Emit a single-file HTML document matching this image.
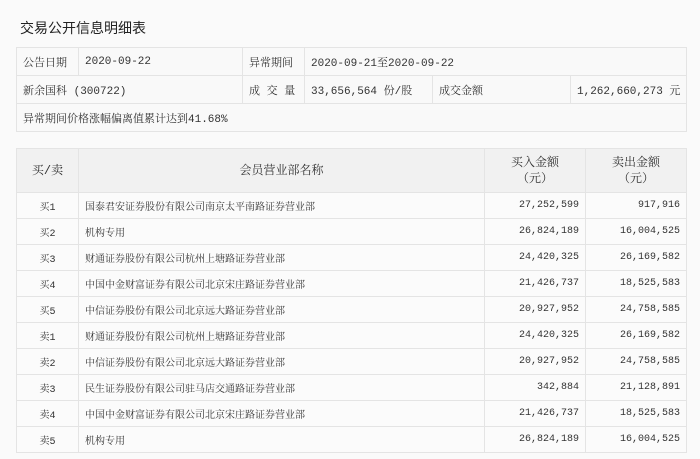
<!DOCTYPE html>
<html><head><meta charset="utf-8"><style>
body{margin:0;width:700px;height:459px;background:#fafafa;font-family:"Liberation Mono","Noto Serif CJK SC",serif;color:#333;position:relative;overflow:hidden}
.t{position:absolute;left:20px;top:18px;font-size:14px;font-family:"Liberation Sans","Noto Sans CJK SC",sans-serif;color:#222}
table{position:absolute;border-collapse:collapse;table-layout:fixed}
td,th{border:1px solid #e4e4e4;font-size:11px;padding:0 6px;white-space:nowrap;font-weight:normal;overflow:hidden}
#a{left:16px;top:47px;width:670px}
#a td{height:27px;background:#f9f9f9}
#b{left:16px;top:148px;width:670px}
#b th{background:#f1f1f1;height:43px;text-align:center;line-height:16px;font-size:12px}
#b td{height:25px;font-size:10px;background:#fbfbfb}
.c{text-align:center}.r{text-align:right}
</style></head><body>
<div class="t">交易公开信息明细表</div>
<table id="a"><colgroup><col style="width:62px"><col style="width:164px"><col style="width:62px"><col style="width:128px"><col style="width:138px"><col style="width:116px"></colgroup>
<tr><td>公告日期</td><td>2020-09-22</td><td>异常期间</td><td colspan="3">2020-09-21至2020-09-22</td></tr>
<tr><td colspan="2">新余国科 (300722)</td><td>成 交 量</td><td>33,656,564 份/股</td><td>成交金额</td><td>1,262,660,273 元</td></tr>
<tr><td colspan="6">异常期间价格涨幅偏离值累计达到41.68%</td></tr>
</table>
<table id="b"><colgroup><col style="width:62px"><col style="width:406px"><col style="width:101px"><col style="width:101px"></colgroup>
<tr><th>买/卖</th><th>会员营业部名称</th><th>买入金额<br>（元）</th><th>卖出金额<br>（元）</th></tr>
<tr><td class="c">买1</td><td>国泰君安证券股份有限公司南京太平南路证券营业部</td><td class="r">27,252,599</td><td class="r">917,916</td></tr>
<tr><td class="c">买2</td><td>机构专用</td><td class="r">26,824,189</td><td class="r">16,004,525</td></tr>
<tr><td class="c">买3</td><td>财通证券股份有限公司杭州上塘路证券营业部</td><td class="r">24,420,325</td><td class="r">26,169,582</td></tr>
<tr><td class="c">买4</td><td>中国中金财富证券有限公司北京宋庄路证券营业部</td><td class="r">21,426,737</td><td class="r">18,525,583</td></tr>
<tr><td class="c">买5</td><td>中信证券股份有限公司北京远大路证券营业部</td><td class="r">20,927,952</td><td class="r">24,758,585</td></tr>
<tr><td class="c">卖1</td><td>财通证券股份有限公司杭州上塘路证券营业部</td><td class="r">24,420,325</td><td class="r">26,169,582</td></tr>
<tr><td class="c">卖2</td><td>中信证券股份有限公司北京远大路证券营业部</td><td class="r">20,927,952</td><td class="r">24,758,585</td></tr>
<tr><td class="c">卖3</td><td>民生证券股份有限公司驻马店交通路证券营业部</td><td class="r">342,884</td><td class="r">21,128,891</td></tr>
<tr><td class="c">卖4</td><td>中国中金财富证券有限公司北京宋庄路证券营业部</td><td class="r">21,426,737</td><td class="r">18,525,583</td></tr>
<tr><td class="c">卖5</td><td>机构专用</td><td class="r">26,824,189</td><td class="r">16,004,525</td></tr>
</table>
</body></html>
